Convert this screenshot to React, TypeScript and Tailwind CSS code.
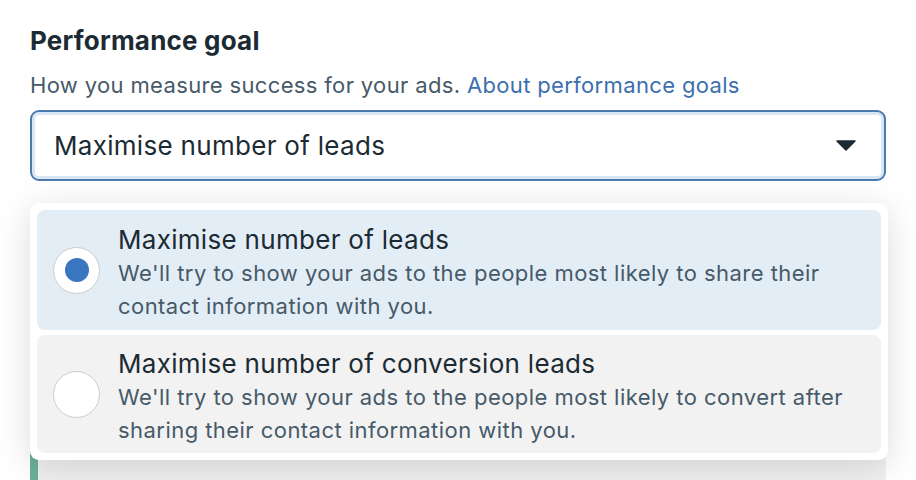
import React from 'react';

const options = [
  {
    title: 'Maximise number of leads',
    desc: "We'll try to show your ads to the people most likely to share their contact information with you.",
    selected: true,
  },
  {
    title: 'Maximise number of conversion leads',
    desc: "We'll try to show your ads to the people most likely to convert after sharing their contact information with you.",
    selected: false,
  },
];

const App: React.FC = () => {
  return (
    <div
      className="relative w-[916px] h-[480px] overflow-hidden bg-white"
      style={{ fontFamily: 'Inter, "Noto Sans", sans-serif' }}
    >
      <div className="px-[30px] pt-[24px]">
        <h2 className="text-[26px] leading-[34px] tracking-[0.2px] font-bold text-[#1c2b33]">Performance goal</h2>
        <p className="mt-[13px] text-[22px] leading-[28px] tracking-[0.35px] text-[#465a69]">
          How you measure success for your ads.{' '}
          <a className="text-[#3b6fae]">About performance goals</a>
        </p>

        {/* Select */}
        <div className="mt-[11px] h-[71px] rounded-[9px] border-2 border-[#4b7aae] bg-white ring-[3px] ring-inset ring-[#d8e6f5] flex items-center justify-between pl-[22px] pr-[28px]">
          <span className="text-[26px] tracking-[0.3px] text-[#1c2b33]">Maximise number of leads</span>
          <svg width="20" height="11" viewBox="0 0 20 11">
            <path d="M1 1h18l-9 9z" fill="#1c2b33" stroke="#1c2b33" strokeWidth="1.5" strokeLinejoin="round" />
          </svg>
        </div>

        {/* Content behind the menu */}
        <div className="mt-[60px] h-[300px] border-l-8 border-[#6aaf9b] bg-[#f0f0f0]" />
      </div>

      {/* Dropdown menu */}
      <div className="absolute left-[30px] top-[203px] w-[858px] rounded-[9px] bg-white p-[7px] shadow-[0_6px_34px_rgba(0,0,0,0.14)] flex flex-col gap-[5px]">
        {options.map((o) => (
          <div
            key={o.title}
            className={`flex items-center rounded-[8px] pl-[16px] pr-[20px] ${
              o.selected ? 'h-[120px] bg-[#e3edf6]' : 'h-[118px] bg-[#f2f2f2]'
            }`}
          >
            <div className="w-[47px] h-[47px] shrink-0 rounded-full bg-white border-[1.5px] border-[#c9ccd0] flex items-center justify-center">
              {o.selected && <div className="w-[24px] h-[24px] rounded-full bg-[#3a75c0]" />}
            </div>
            <div className="ml-[18px] pt-[6px]">
              <div className="text-[26px] leading-[34px] tracking-[0.3px] text-[#1c2b33]">{o.title}</div>
              <div className="text-[22px] leading-[33px] tracking-[0.45px] text-[#465a69]">{o.desc}</div>
            </div>
          </div>
        ))}
      </div>
    </div>
  );
};

export default App;
